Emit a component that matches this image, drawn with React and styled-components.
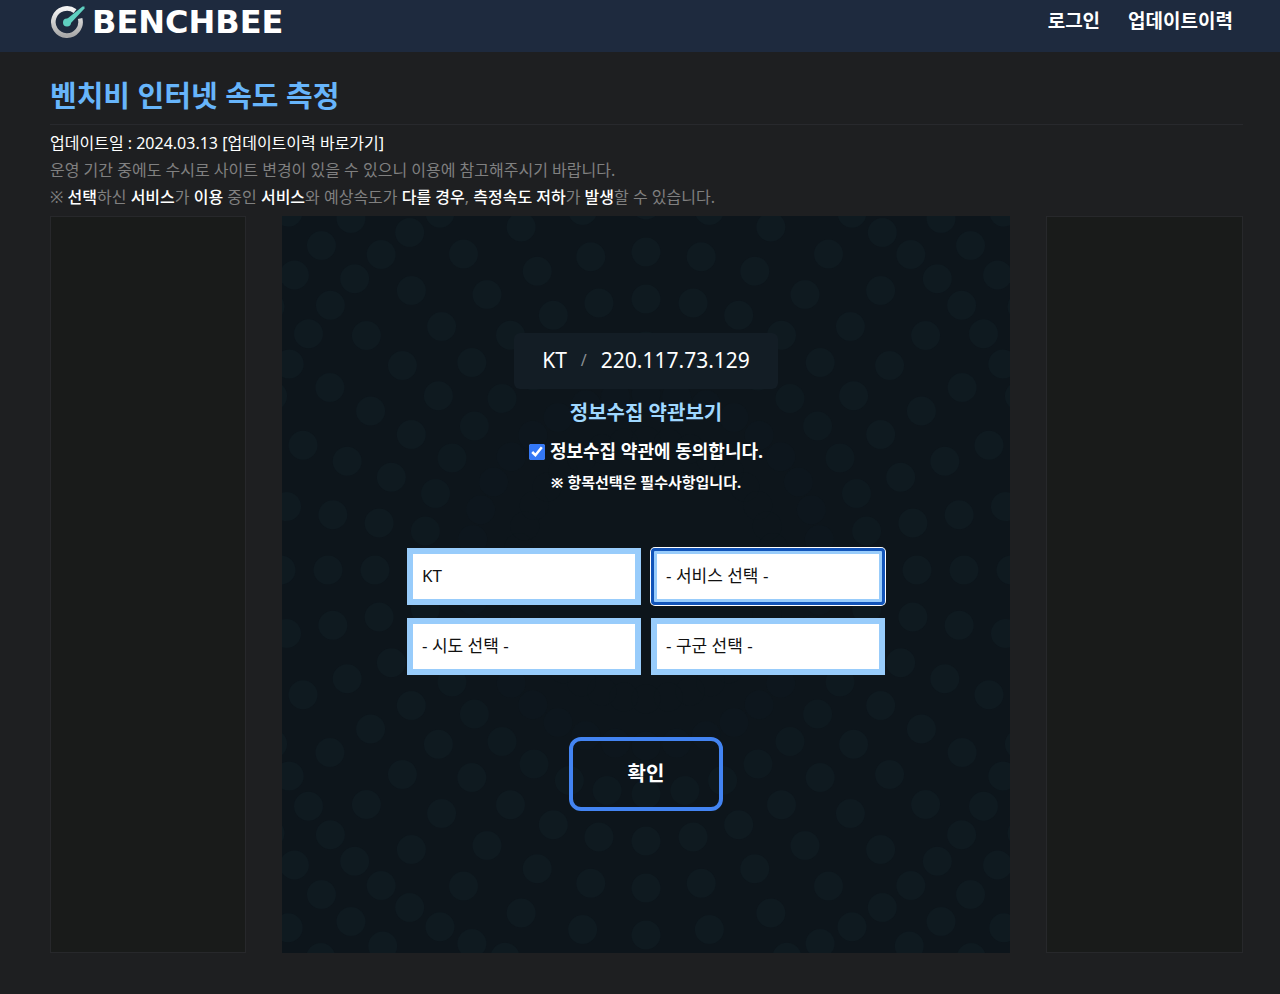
import React from 'react'
import styled, { createGlobalStyle } from 'styled-components'

const GlobalStyle = createGlobalStyle`
  * {
    box-sizing: border-box;
  }
  body {
    margin: 0;
    background: #1e1f21;
    color: #fff;
    font-family: 'Noto Sans', 'Noto Sans CJK KR', sans-serif;
    font-size: 16px;
  }
`

const Header = styled.header`
  display: flex;
  justify-content: space-between;
  align-items: flex-start;
  height: 52px;
  padding: 0 47px 0 50px;
  background: #1e2a3e;
`

const Logo = styled.a`
  display: flex;
  align-items: center;
  gap: 6px;
  height: 44px;
  color: #fff;
  font-family: 'DejaVu Sans', sans-serif;
  font-size: 32px;
  font-weight: 700;
  line-height: 44px;
  text-decoration: none;
`

const Nav = styled.nav`
  display: flex;
  gap: 28px;
`

const NavLink = styled.a`
  color: #fff;
  font-size: 19px;
  font-weight: 700;
  line-height: 42px;
  text-decoration: none;
`

const Main = styled.main`
  padding: 20px 37px 41px 50px;
`

const Title = styled.h1`
  margin: 0;
  padding-bottom: 4px;
  border-bottom: 1px solid #28292d;
  color: #67b5fb;
  font-size: 29px;
  font-weight: 700;
  line-height: 48px;
`

const Notice = styled.div`
  padding: 5px 0;
  color: #808080;
  line-height: 27px;

  p {
    margin: 0;
  }
  a,
  b {
    color: #fff;
    text-decoration: none;
  }
  b {
    font-weight: 500;
  }
`

const UpdateDate = styled.p`
  color: #fff;
`

const Columns = styled.div`
  display: grid;
  grid-template-columns: 196px 1fr 197px;
  column-gap: 36px;
`

const Banner = styled.aside`
  background: #191b1a;
  border: 1px solid #27282b;
`

const Panel = styled.section`
  position: relative;
  padding: 117px 20px 142px;
  background: #0d151b;
`

const Pattern = styled.svg`
  position: absolute;
  inset: 0;
  width: 100%;
  height: 100%;
`

const Form = styled.form`
  position: relative;
  display: flex;
  flex-direction: column;
  align-items: center;
`

const Connection = styled.div`
  display: flex;
  align-items: center;
  justify-content: center;
  gap: 14px;
  height: 56px;
  padding: 0 28px 2px;
  border-radius: 6px;
  background: #131d25;
  font-size: 21px;
`

const Slash = styled.span`
  color: #8a8f93;
  font-size: 16px;
`

const TermsLink = styled.a`
  margin-top: 4px;
  color: #a0d8ff;
  font-size: 20px;
  font-weight: 700;
  line-height: 40px;
  text-decoration: none;
`

const Agree = styled.label`
  display: flex;
  align-items: center;
  gap: 5px;
  font-size: 18px;
  font-weight: 700;
  line-height: 37px;

  input {
    width: 16px;
    height: 16px;
    margin: 0;
    accent-color: #3478f6;
  }
`

const Required = styled.p`
  margin: 0;
  font-size: 15px;
  font-weight: 700;
  line-height: 24px;
`

const Fields = styled.div`
  display: grid;
  grid-template-columns: 234px 234px;
  gap: 13px 10px;
  margin-top: 54px;
`

const Select = styled.select`
  appearance: none;
  height: 57px;
  padding: 0 9px 2px;
  border: 6px solid #98ccfb;
  border-radius: 0;
  background: #fff;
  color: #111;
  font-family: inherit;
  font-size: 17px;

  &:focus {
    border-radius: 4px;
    outline: 3px solid #1254b9;
    outline-offset: -3px;
    box-shadow: 0 0 0 1px #fff;
  }
`

const Confirm = styled.button`
  width: 154px;
  height: 74px;
  margin-top: 62px;
  padding: 0 0 4px;
  border: 4px solid #4384f2;
  border-radius: 12px;
  background: transparent;
  color: #fff;
  font-family: inherit;
  font-size: 20px;
  font-weight: 700;
`

// step is the angle between two dots of the ring
const rings = [
  { r: 129, step: 10, opacity: 0.2 },
  { r: 176, step: 10, opacity: 0.4 },
  { r: 224, step: 10, opacity: 0.8 },
  { r: 271, step: 10, opacity: 1 },
  { r: 318, step: 10, opacity: 1 },
  { r: 365, step: 10, opacity: 1 },
  { r: 412, step: 5, opacity: 1 },
  { r: 459, step: 5, opacity: 1 },
  { r: 506, step: 5, opacity: 1 }
]

const dots = rings.flatMap(({ r, step, opacity }) =>
  Array.from({ length: 360 / step }, (_, i) => {
    const angle = (i * step * Math.PI) / 180
    return { x: 364 + r * Math.cos(angle), y: 354 + r * Math.sin(angle), opacity }
  })
)

const selects = [
  { name: 'isp', label: '통신사', option: 'KT' },
  { name: 'service', label: '서비스', option: '- 서비스 선택 -' },
  { name: 'sido', label: '시도', option: '- 시도 선택 -' },
  { name: 'gugun', label: '구군', option: '- 구군 선택 -' }
]

const LogoMark = () => (
  <svg width="36" height="34" viewBox="0 0 36 34" aria-hidden="true">
    <defs>
      <linearGradient id="ring" x1="0" y1="0" x2="0" y2="1">
        <stop offset="0" stopColor="#f4f4f4" />
        <stop offset="1" stopColor="#a9a9a9" />
      </linearGradient>
    </defs>
    <path
      d="M25.1 6.1 A13.6 13.6 0 1 0 30.1 13.5"
      fill="none"
      stroke="url(#ring)"
      strokeWidth="4.6"
    />
    <path d="M32.5 1.5 L34.5 1.5 L34.5 3.5 L19.5 19.5 L15 15.5 Z" fill="#5fcfc0" />
    <circle cx="17" cy="17.5" r="4" fill="#5fcfc0" />
  </svg>
)

export default function App() {
  return (
    <>
      <GlobalStyle />
      <Header>
        <Logo href="#">
          <LogoMark />
          BENCHBEE
        </Logo>
        <Nav>
          <NavLink href="#login">로그인</NavLink>
          <NavLink href="#history">업데이트이력</NavLink>
        </Nav>
      </Header>
      <Main>
        <Title>벤치비 인터넷 속도 측정</Title>
        <Notice>
          <UpdateDate>
            업데이트일 : 2024.03.13 <a href="#history">[업데이트이력 바로가기]</a>
          </UpdateDate>
          <p>운영 기간 중에도 수시로 사이트 변경이 있을 수 있으니 이용에 참고해주시기 바랍니다.</p>
          <p>
            ※ <b>선택</b>하신 <b>서비스</b>가 <b>이용</b> 중인 <b>서비스</b>와 예상속도가{' '}
            <b>다를 경우</b>, <b>측정속도 저하</b>가 <b>발생</b>할 수 있습니다.
          </p>
        </Notice>
        <Columns>
          <Banner />
          <Panel>
            <Pattern viewBox="0 0 728 737" preserveAspectRatio="xMidYMid slice" aria-hidden="true">
              {dots.map((dot, i) => (
                <circle key={i} cx={dot.x} cy={dot.y} r="14.5" fill="#0f1a20" opacity={dot.opacity} />
              ))}
            </Pattern>
            <Form onSubmit={(e) => e.preventDefault()}>
              <Connection>
                <span>KT</span>
                <Slash>/</Slash>
                <span>220.117.73.129</span>
              </Connection>
              <TermsLink href="#terms">정보수집 약관보기</TermsLink>
              <Agree>
                <input type="checkbox" defaultChecked />
                정보수집 약관에 동의합니다.
              </Agree>
              <Required>※ 항목선택은 필수사항입니다.</Required>
              <Fields>
                {selects.map((item) => (
                  <Select
                    key={item.name}
                    name={item.name}
                    aria-label={item.label}
                    autoFocus={item.name === 'service'}
                  >
                    <option>{item.option}</option>
                  </Select>
                ))}
              </Fields>
              <Confirm type="submit">확인</Confirm>
            </Form>
          </Panel>
          <Banner />
        </Columns>
      </Main>
    </>
  )
}
